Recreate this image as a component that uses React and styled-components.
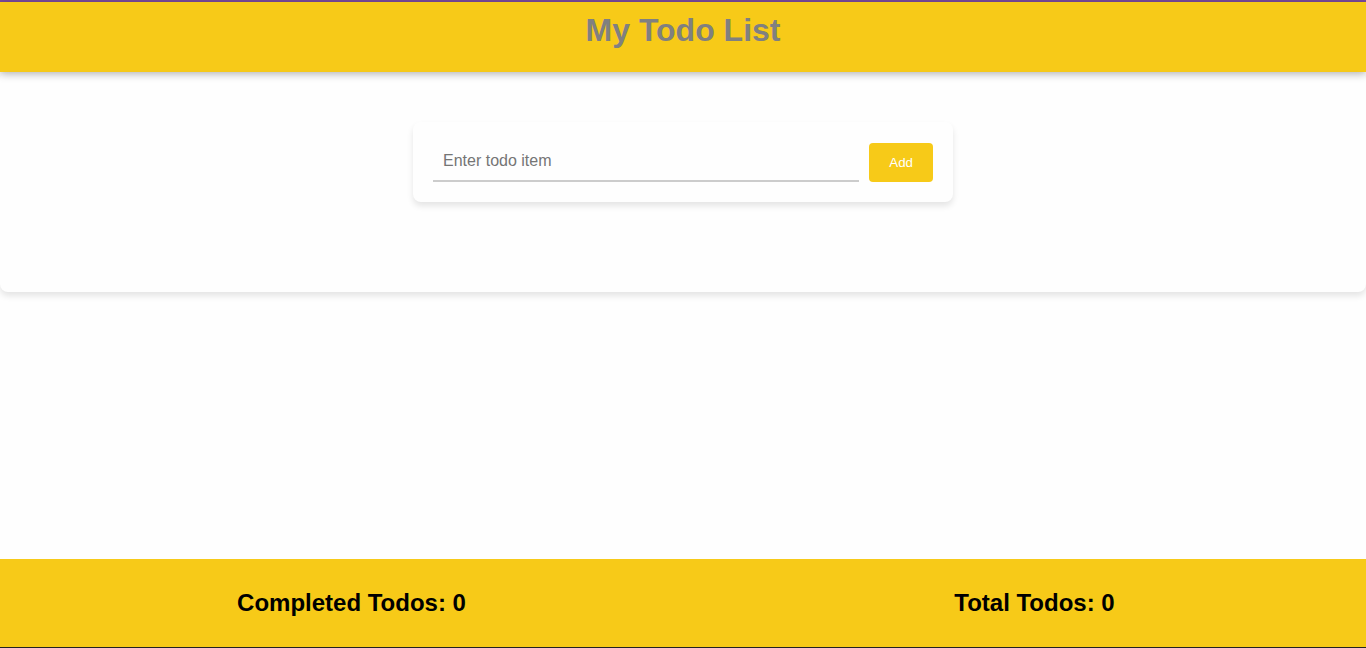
import React, { useState } from "react";
import styled, { createGlobalStyle } from "styled-components";

const GlobalStyle = createGlobalStyle`
  * { box-sizing: border-box; }
  body {
    margin: 0;
    background: #fefefe;
    font-family: "Liberation Sans", Arial, sans-serif;
  }
`;

const Page = styled.div`
  display: flex;
  flex-direction: column;
  min-height: 100vh;
  border-top: 2px solid #7b4a9c;
  border-bottom: 1px solid #222;
`;

const Header = styled.header`
  padding: 10px 20px 24px;
  background: #f7ca18;
  box-shadow: 0 2px 8px rgba(0, 0, 0, 0.3);
  text-align: center;
`;

const Title = styled.h1`
  margin: 0;
  color: #808080;
  font-size: 32px;
  line-height: 36px;
`;

const Panel = styled.main`
  padding: 50px 0 90px;
  border-radius: 8px;
  box-shadow: 0 4px 6px rgba(0, 0, 0, 0.1);
`;

const TodoForm = styled.form`
  display: flex;
  align-items: flex-end;
  gap: 10px;
  max-width: 540px;
  margin: 0 auto;
  padding: 20px;
  border-radius: 8px;
  box-shadow: 0 4px 6px rgba(0, 0, 0, 0.1);
`;

const TodoInput = styled.input`
  flex: 1;
  min-width: 0;
  padding: 10px;
  border: 0;
  border-bottom: 2px solid #ccc;
  outline: 0;
  background: transparent;
  font: 16px/18px "Liberation Sans", Arial, sans-serif;
  &::placeholder { color: #757575; }
`;

const AddButton = styled.button`
  padding: 12px 20px;
  border: 0;
  border-radius: 4px;
  background: #f7ca18;
  color: #fff;
  font-family: "Liberation Sans", Arial, sans-serif;
  line-height: 15px;
  cursor: pointer;
`;

const Footer = styled.footer`
  display: grid;
  grid-template-columns: 1fr 1fr;
  margin-top: auto;
  padding: 30px 0;
  background: #f7ca18;
`;

const Counter = styled.h2`
  margin: 0;
  padding-left: 20px;
  color: #000;
  font-size: 24px;
  line-height: 28px;
  text-align: center;
`;

export default function App() {
  const [text, setText] = useState("");
  const [total, setTotal] = useState(0);
  const addTodo = (event) => {
    event.preventDefault();
    if (!text.trim()) return;
    setTotal(total + 1);
    setText("");
  };
  return (
    <>
      <GlobalStyle />
      <Page>
        <Header><Title>My Todo List</Title></Header>
        <Panel>
          <TodoForm onSubmit={addTodo}>
            <TodoInput
              aria-label="Todo item"
              placeholder="Enter todo item"
              value={text}
              onChange={(event) => setText(event.target.value)}
            />
            <AddButton type="submit">Add</AddButton>
          </TodoForm>
        </Panel>
        <Footer>
          <Counter>Completed Todos: 0</Counter>
          <Counter>Total Todos: {total}</Counter>
        </Footer>
      </Page>
    </>
  );
}
